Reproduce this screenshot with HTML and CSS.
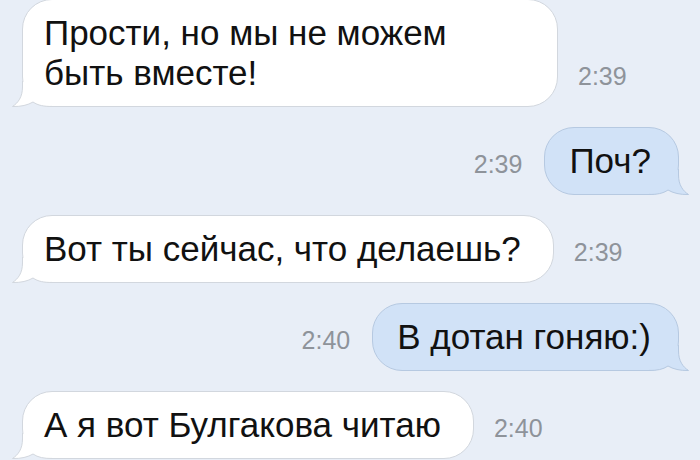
FILE: index.html
```html
<!DOCTYPE html>
<html lang="ru">
<head>
    <meta charset="UTF-8"/>
    <title>Сообщения</title>
    <link rel="stylesheet" href="styles.css">
</head>
<body>
<main class="chat">
    <div class="row in">
        <div class="bubble">
            Прости, но мы не можем быть вместе!
            <svg class="tail" width="40" height="26" viewBox="0 0 40 26"><path d="M10.5,0 V6 C10.5,16 6,22 0.5,25.5 C9,25.8 16,24 21,21 C26,24.5 32,25.5 40,25.5"/></svg>
        </div>
        <span class="time">2:39</span>
    </div>

    <div class="row out">
        <span class="time">2:39</span>
        <div class="bubble">
            Поч?
            <svg class="tail" width="40" height="26" viewBox="0 0 40 26"><path d="M10.5,0 V6 C10.5,16 6,22 0.5,25.5 C9,25.8 16,24 21,21 C26,24.5 32,25.5 40,25.5"/></svg>
        </div>
    </div>

    <div class="row in">
        <div class="bubble">
            Вот ты сейчас, что делаешь?
            <svg class="tail" width="40" height="26" viewBox="0 0 40 26"><path d="M10.5,0 V6 C10.5,16 6,22 0.5,25.5 C9,25.8 16,24 21,21 C26,24.5 32,25.5 40,25.5"/></svg>
        </div>
        <span class="time">2:39</span>
    </div>

    <div class="row out">
        <span class="time">2:40</span>
        <div class="bubble">
            В дотан гоняю:)
            <svg class="tail" width="40" height="26" viewBox="0 0 40 26"><path d="M10.5,0 V6 C10.5,16 6,22 0.5,25.5 C9,25.8 16,24 21,21 C26,24.5 32,25.5 40,25.5"/></svg>
        </div>
    </div>

    <div class="row in">
        <div class="bubble">
            А я вот Булгакова читаю
            <svg class="tail" width="40" height="26" viewBox="0 0 40 26"><path d="M10.5,0 V6 C10.5,16 6,22 0.5,25.5 C9,25.8 16,24 21,21 C26,24.5 32,25.5 40,25.5"/></svg>
        </div>
        <span class="time">2:40</span>
    </div>
</main>
</body>
</html>
```

FILE: styles.css
```css
:root {
    --bg: #e8eef7;
    --in-fill: #ffffff;
    --in-line: #d2d7de;
    --out-fill: #d1e2f7;
    --out-line: #b6c9e1;
    --time: #8e939a;
}

html, body {
    height: 100%;
    margin: 0;
    padding: 0;
}

body {
    background-color: var(--bg);
    font-family: "Liberation Sans", Arial, sans-serif;
    color: #111;
    overflow: hidden;
}

.chat {
    display: flex;
    flex-direction: column;
    gap: 20px;
    margin-top: -1px;
    padding: 0 21px 0 22px;
}

.row {
    display: flex;
    align-items: flex-end;
}

.row.in {
    justify-content: flex-start;
    gap: 20px;
}

.row.out {
    justify-content: flex-end;
    gap: 22px;
}

.bubble {
    position: relative;
    max-width: 536px;
    box-sizing: border-box;
    font-size: 35px;
    line-height: 40px;
    border-radius: 30px;
}

.in .bubble {
    padding: 13px 32px 13px 21px;
    background-color: var(--in-fill);
    border: 1px solid var(--in-line);
}

.out .bubble {
    padding: 13px 27px 13px 24px;
    background-color: var(--out-fill);
    border: 1px solid var(--out-line);
}

.tail {
    position: absolute;
    bottom: -1px;
    left: -11px;
    overflow: visible;
}

.out .tail {
    left: auto;
    right: -11px;
    transform: scaleX(-1);
}

.in .tail path {
    fill: var(--in-fill);
    stroke: var(--in-line);
}

.out .tail path {
    fill: var(--out-fill);
    stroke: var(--out-line);
}

.time {
    font-size: 25px;
    line-height: 25px;
    color: var(--time);
    margin-bottom: 18px;
}
```
